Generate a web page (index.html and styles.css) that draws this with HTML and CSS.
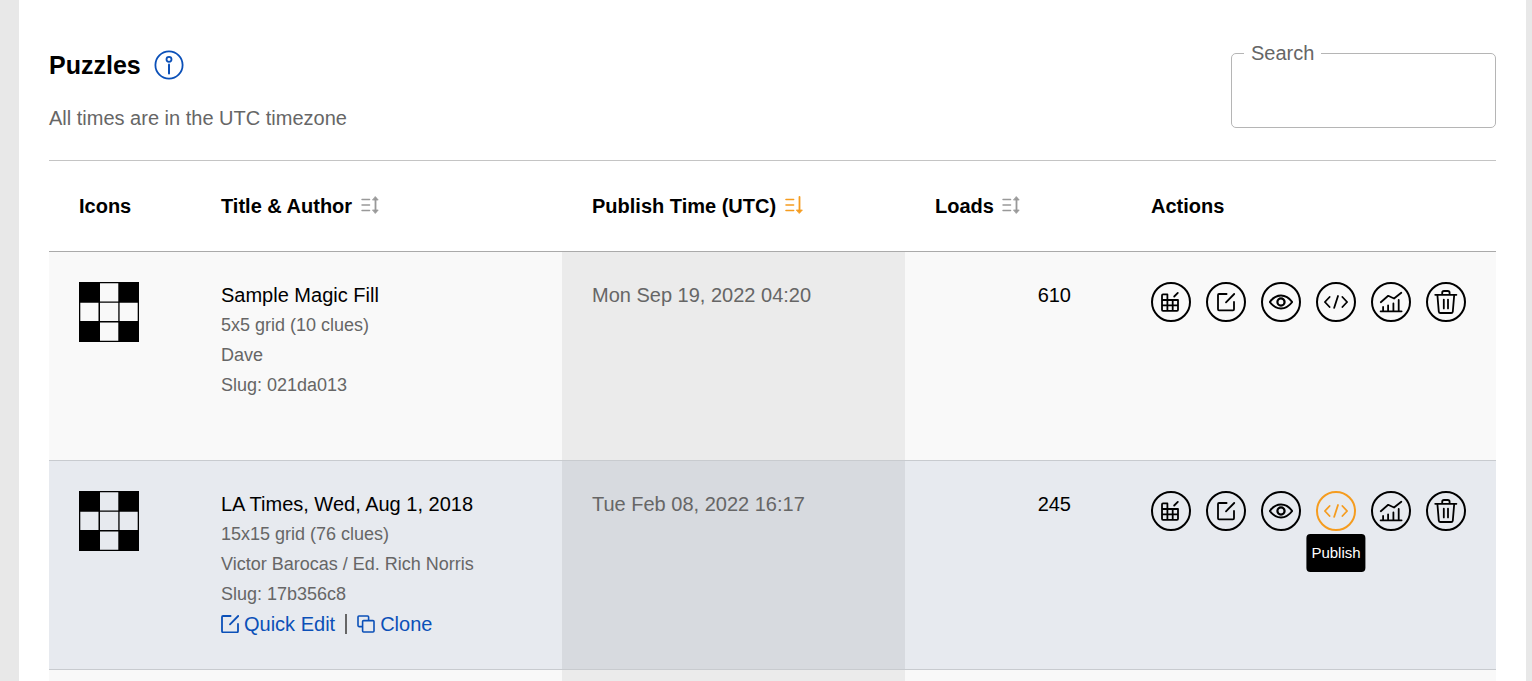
FILE: index.html
```html
<!DOCTYPE html>
<html lang="en">
<head>
    <meta charset="UTF-8">
    <meta name="viewport" content="width=device-width, initial-scale=1.0">
    <title>Puzzles</title>
    <link rel="stylesheet" href="styles.css">
</head>
<body>
    <svg class="sprite" aria-hidden="true">
        <symbol id="thumb" viewBox="0 0 60 60">
            <path fill="currentColor" fill-rule="evenodd" d="M0 0H60V60H0ZM21 1.3V19.5H39.3V1.3ZM1.3 20.8V39H19.5V20.8ZM21 20.8V39H39.3V20.8ZM40.6 20.8V39H58.7V20.8ZM21 40.4V58.7H39.3V40.4Z"/>
        </symbol>
        <symbol id="sort-both" viewBox="0 0 18 18">
            <path d="M1 3.5H8.6M1 9H8.6M1 14.5H8.6" stroke-width="1.4"/>
            <path d="M14.5 3V15" stroke-width="1.8"/>
            <path d="M14.5 0.8L17.2 4H11.8ZM14.5 17.2L17.2 14H11.8Z" fill="currentColor" stroke-width="0.8"/>
        </symbol>
        <symbol id="sort-down" viewBox="0 0 18 18">
            <path d="M1 3.5H8.6M1 9H8.6M1 14.5H8.6" stroke-width="1.6"/>
            <path d="M14.5 1V15" stroke-width="1.8"/>
            <path d="M14.5 17.2L17.4 14H11.6Z" fill="currentColor" stroke-width="0.8"/>
        </symbol>
        <symbol id="fill" viewBox="0 0 24 24">
            <path d="M3 5.4Q3 4.4 4 4.4H8.4V20.8M3 5.4V19.8Q3 20.8 4 20.8H18Q19 20.8 19 19.8V10H3M3 15.3H19M13.7 10V20.8M15.2 6.5L18.8 2.9" stroke-width="1.8"/>
        </symbol>
        <symbol id="edit" viewBox="0 0 24 24">
            <path d="M12.6 4H5Q4 4 4 5V19.3Q4 20.3 5 20.3H19Q20 20.3 20 19.3V12M12 12.3L20.2 4" stroke-width="1.8"/>
        </symbol>
        <symbol id="eye" viewBox="0 0 24 24">
            <path d="M0.8 12Q5.6 5.6 12 5.6T23.2 12Q18.4 18.4 12 18.4T0.8 12Z" stroke-width="2"/>
            <circle cx="12" cy="12" r="3.6" stroke-width="2.2"/>
        </symbol>
        <symbol id="code" viewBox="0 0 24 24">
            <path d="M5.6 7L0.9 12L5.6 17M14 6L10.2 17.8M18.4 7L23.1 12L18.4 17" stroke-width="1.8"/>
        </symbol>
        <symbol id="chart" viewBox="0 0 24 24">
            <path d="M1.8 12.2L9.2 5.8L15 8.5L22.3 2.7M1.6 21.3H22.6M4.1 17V21M9.1 15.3V21M14.4 13.4V21M19.7 10V21" stroke-width="1.8"/>
        </symbol>
        <symbol id="trash" viewBox="0 0 24 24">
            <path d="M1.2 4.8H22.4M8.2 4.6V2.8Q8.2 1 10 1H13.8Q15.6 1 15.6 2.8V4.6M3.4 5L4.8 21.6Q5 23 6.4 23H17.2Q18.6 23 18.8 21.6L20.2 5M9.8 9.6V18.4M14 9.6V18.4" stroke-width="1.8"/>
        </symbol>
        <symbol id="clone" viewBox="0 0 18 18">
            <path d="M5.6 11.6H2Q1 11.6 1 10.6V2Q1 1 2 1H10.6Q11.6 1 11.6 2V5.6M6.6 5.6H16Q17 5.6 17 6.6V16Q17 17 16 17H6.6Q5.6 17 5.6 16V6.6Q5.6 5.6 6.6 5.6Z" stroke-width="1.6"/>
        </symbol>
    </svg>

    <main class="page">
        <header class="page-header">
            <div>
                <div class="heading">
                    <h1>Puzzles</h1>
                    <button class="info-btn" type="button" aria-label="About puzzles">
                        <svg class="line" viewBox="0 0 30 30">
                            <circle cx="15" cy="15" r="13.6" stroke-width="1.8"/>
                            <circle cx="15" cy="9.3" r="2.5" stroke-width="1.8"/>
                            <path d="M15 14.6V23.4" stroke-width="2"/>
                        </svg>
                    </button>
                </div>
                <p class="timezone">All times are in the UTC timezone</p>
            </div>
            <fieldset class="search">
                <legend><label for="search">Search</label></legend>
                <input id="search" type="text">
            </fieldset>
        </header>

        <table class="puzzles">
            <colgroup>
                <col class="col-icons">
                <col class="col-title">
                <col class="col-time">
                <col class="col-loads">
                <col class="col-actions">
            </colgroup>
            <thead>
                <tr>
                    <th>Icons</th>
                    <th>Title &amp; Author <button class="sort" type="button" aria-label="Sort by title"><svg class="line"><use href="#sort-both"/></svg></button></th>
                    <th>Publish Time (UTC) <button class="sort active" type="button" aria-label="Sort by publish time"><svg class="line"><use href="#sort-down"/></svg></button></th>
                    <th>Loads <button class="sort" type="button" aria-label="Sort by loads"><svg class="line"><use href="#sort-both"/></svg></button></th>
                    <th>Actions</th>
                </tr>
            </thead>
            <tbody>
                <tr>
                    <td class="icon-cell"><svg class="thumb"><use href="#thumb"/></svg></td>
                    <td>
                        <div class="info">
                            <div class="title">Sample Magic Fill</div>
                            <div class="meta">5x5 grid (10 clues)</div>
                            <div class="meta">Dave</div>
                            <div class="meta">Slug: 021da013</div>
                        </div>
                    </td>
                    <td class="time">Mon Sep 19, 2022 04:20</td>
                    <td class="loads">610</td>
                    <td class="icon-cell">
                        <div class="actions">
                            <button type="button" aria-label="Fill"><svg class="line"><use href="#fill"/></svg></button>
                            <button type="button" aria-label="Edit"><svg class="line"><use href="#edit"/></svg></button>
                            <button type="button" aria-label="Preview"><svg class="line"><use href="#eye"/></svg></button>
                            <button type="button" aria-label="Publish"><svg class="line"><use href="#code"/></svg></button>
                            <button type="button" aria-label="Statistics"><svg class="line"><use href="#chart"/></svg></button>
                            <button type="button" aria-label="Delete"><svg class="line"><use href="#trash"/></svg></button>
                        </div>
                    </td>
                </tr>
                <tr class="selected">
                    <td class="icon-cell"><svg class="thumb"><use href="#thumb"/></svg></td>
                    <td>
                        <div class="info">
                            <div class="title">LA Times, Wed, Aug 1, 2018</div>
                            <div class="meta">15x15 grid (76 clues)</div>
                            <div class="meta">Victor Barocas / Ed. Rich Norris</div>
                            <div class="meta">Slug: 17b356c8</div>
                            <div class="links">
                                <a href="#"><svg class="line" viewBox="3 3 18 18"><use href="#edit" width="24" height="24"/></svg>Quick Edit</a>
                                <span class="divider"></span>
                                <a href="#"><svg class="line"><use href="#clone"/></svg>Clone</a>
                            </div>
                        </div>
                    </td>
                    <td class="time">Tue Feb 08, 2022 16:17</td>
                    <td class="loads">245</td>
                    <td class="icon-cell">
                        <div class="actions">
                            <button type="button" aria-label="Fill"><svg class="line"><use href="#fill"/></svg></button>
                            <button type="button" aria-label="Edit"><svg class="line"><use href="#edit"/></svg></button>
                            <button type="button" aria-label="Preview"><svg class="line"><use href="#eye"/></svg></button>
                            <button class="active" type="button"><svg class="line"><use href="#code"/></svg><span class="tooltip">Publish</span></button>
                            <button type="button" aria-label="Statistics"><svg class="line"><use href="#chart"/></svg></button>
                            <button type="button" aria-label="Delete"><svg class="line"><use href="#trash"/></svg></button>
                        </div>
                    </td>
                </tr>
                <tr>
                    <td></td>
                    <td></td>
                    <td class="time"></td>
                    <td></td>
                    <td></td>
                </tr>
            </tbody>
        </table>
    </main>
</body>
</html>
```
FILE: styles.css
```css
* { box-sizing: border-box; }
body { margin: 0; height: 100vh; overflow: hidden; background: #e8e8e8; color: #000; font-family: "Liberation Sans", Arial, sans-serif; font-size: 20px; line-height: 30px; }
button { padding: 0; border: none; background: none; color: inherit; font: inherit; cursor: pointer; }
svg { display: block; }
.sprite { display: none; }
.line { fill: none; stroke: currentColor; stroke-linecap: round; stroke-linejoin: round; }

.page { height: 100vh; overflow: hidden; margin: 0 6px 0 19px; padding: 41px 30px 0; background: #fff; }
.page-header { display: flex; justify-content: space-between; align-items: flex-start; padding-bottom: 29px; }
.heading { display: flex; align-items: center; gap: 13px; height: 47px; }
.heading h1 { margin: 0; font-size: 25px; line-height: 46px; }
.info-btn { color: #0b50b8; }
.info-btn svg { width: 30px; height: 30px; }
.timezone { margin: 17px 0 0; color: #666; line-height: 26px; }

.search { width: 265px; height: 87px; margin: 0; padding: 0 12px; border: 1px solid #b5b5b5; border-radius: 5px; color: #666; }
.search legend { padding: 0 7px; line-height: 24px; }
.search input { width: 100%; height: 50px; padding: 0 8px; border: none; outline: none; background: none; font: inherit; }

.puzzles { width: 100%; table-layout: fixed; border-spacing: 0; border-top: 1px solid #c4c4c4; }
.col-icons { width: 142px; }
.col-time { width: 343px; }
.col-loads { width: 216px; }
.col-actions { width: 375px; }
th { padding: 30px; border-bottom: 1px solid #aaa; text-align: left; }
td { padding: 28px 30px 30px; border-bottom: 1px solid #c8cbcf; background: #f9f9f9; vertical-align: top; }
.icon-cell { padding-top: 30px; }
.time { background: #ebebeb; color: #666; }
.loads { padding-right: 50px; text-align: right; }
.selected td { background: #e7eaef; }
.selected .time { background: #d7dadf; }

.sort { margin-left: 3px; color: #999; vertical-align: -1px; }
.sort svg { width: 18px; height: 18px; }
.sort.active { color: #f59c1f; }
.thumb { width: 60px; height: 60px; }

.info { min-height: 150px; }
.meta { color: #666; font-size: 18px; }
.links { display: flex; align-items: center; gap: 10px; }
.links a { display: flex; align-items: center; gap: 5px; color: #0b50b8; text-decoration: none; }
.links svg { width: 18px; height: 18px; }
.divider { width: 2px; height: 20px; background: #666; }

.actions { display: flex; gap: 15px; }
.actions button { position: relative; display: flex; align-items: center; justify-content: center; width: 40px; height: 40px; border: 2px solid currentColor; border-radius: 50%; }
.actions svg { width: 24px; height: 24px; }
.actions .active { color: #f59c1f; }
.tooltip { position: absolute; top: 41px; left: 50%; transform: translateX(-50%); padding: 4px 5px; border-radius: 4px; background: #000; color: #fff; font-size: 15px; }
```
